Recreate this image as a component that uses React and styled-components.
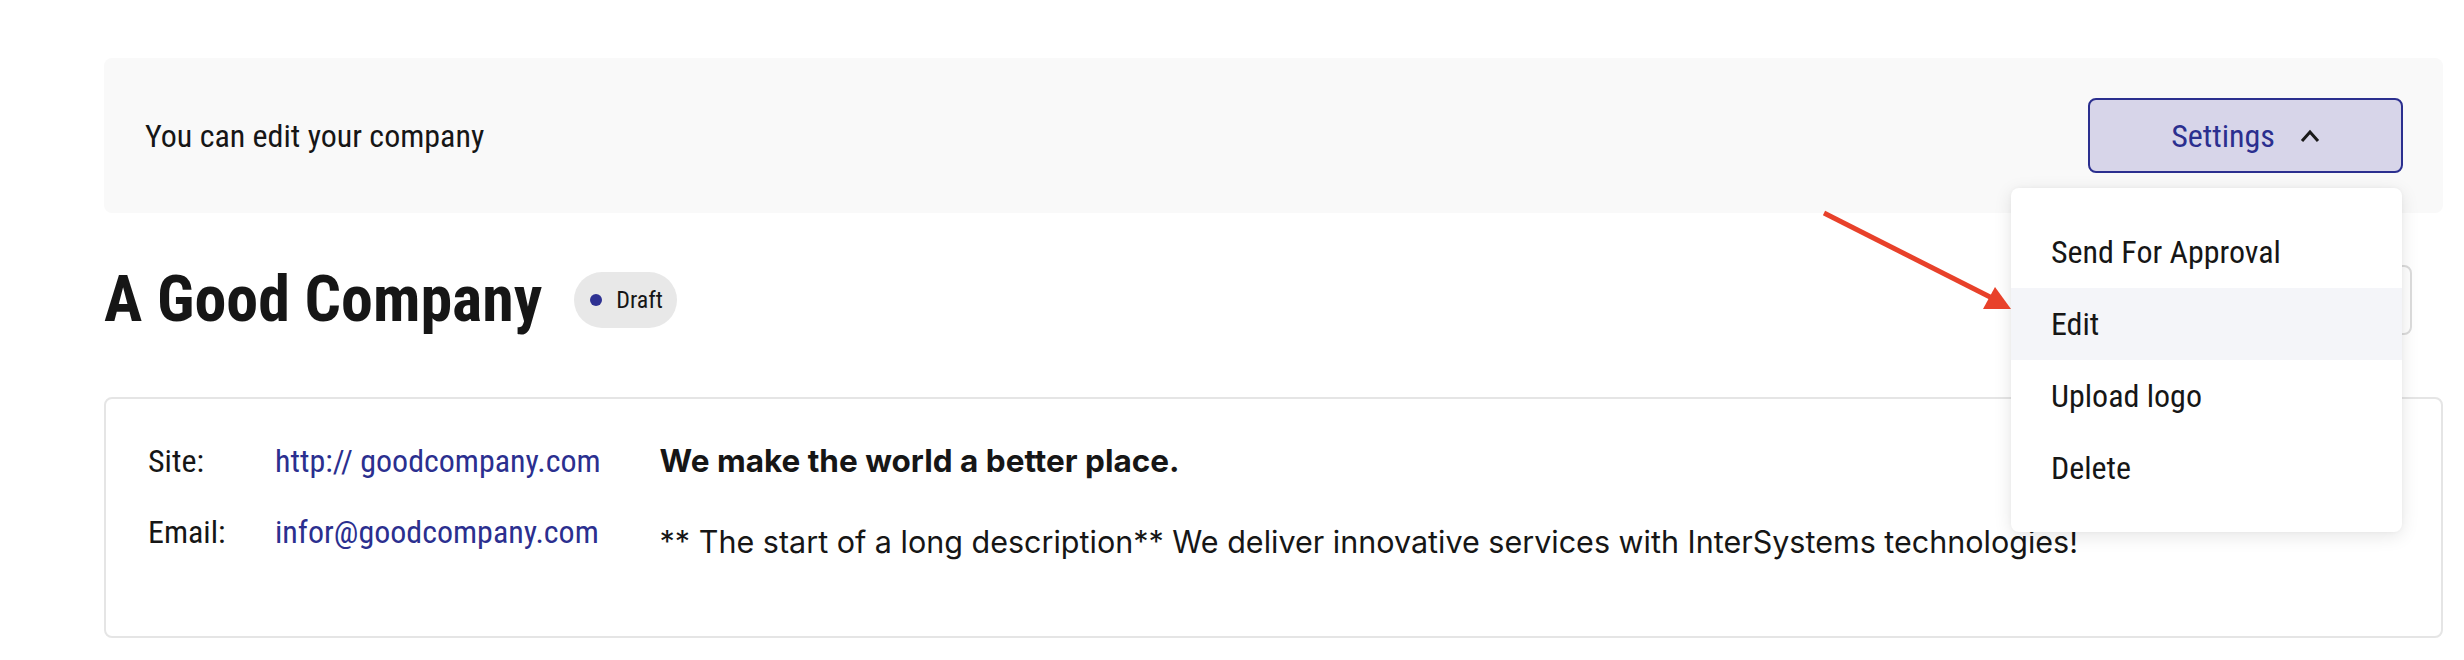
import styled, { createGlobalStyle } from "styled-components";

const GlobalStyle = createGlobalStyle`
  body {
    margin: 0;
    background: #ffffff;
    font-family: "Roboto Condensed", Roboto, "Liberation Sans", sans-serif;
    font-stretch: condensed;
    color: #161616;
  }
`;

const menuItems = ["Send For Approval", "Edit", "Upload logo", "Delete"];

export default function App() {
  return (
    <Page>
      <GlobalStyle />
      <Toolbar>
        <ToolbarText>You can edit your company</ToolbarText>
        <SettingsWrap>
          <SettingsButton>
            Settings
            <Chevron viewBox="0 0 20 14">
              <path d="M2 12 L10 3 L18 12" />
            </Chevron>
          </SettingsButton>
          <Menu>
            {menuItems.map((item) => (
              <MenuItem key={item} $active={item === "Edit"}>
                {item}
              </MenuItem>
            ))}
          </Menu>
        </SettingsWrap>
      </Toolbar>

      <TitleRow>
        <TitleGroup>
          <Title>A Good Company</Title>
          <Badge>
            <Dot />
            Draft
          </Badge>
        </TitleGroup>
        <GhostButton />
      </TitleRow>

      <Card>
        <Details>
          <Label>Site:</Label>
          <Value>http:// goodcompany.com</Value>
          <Label>Email:</Label>
          <Value>infor@goodcompany.com</Value>
        </Details>
        <About>
          <Headline>We make the world a better place.</Headline>
          <Description>
            ** The start of a long description** We deliver innovative services
            with InterSystems technologies!
          </Description>
        </About>
      </Card>

      <Arrow width="220" height="110" viewBox="0 0 220 110">
        <line x1="3" y1="3" x2="175" y2="90" />
        <polygon points="162,99 174,77 190,99" />
      </Arrow>
    </Page>
  );
}

const Page = styled.div`
  position: relative;
  padding: 58px 21px 0 104px;
`;

const Toolbar = styled.div`
  height: 155px;
  box-sizing: border-box;
  padding: 0 40px 0 41px;
  display: flex;
  align-items: center;
  justify-content: space-between;
  background: #f9f9f9;
  border-radius: 8px;
`;

const ToolbarText = styled.span`
  font-size: 32px;
`;

const SettingsWrap = styled.div`
  position: relative;
`;

const SettingsButton = styled.button`
  width: 315px;
  height: 75px;
  display: flex;
  align-items: center;
  justify-content: center;
  gap: 25px;
  padding: 0;
  background: #d7d5e9;
  border: 2px solid #2b2f8f;
  border-radius: 8px;
  color: #2b2f8f;
  font-family: inherit;
  font-stretch: condensed;
  font-size: 32px;
`;

const Chevron = styled.svg`
  width: 20px;
  height: 14px;
  fill: none;
  stroke: #1a1a1a;
  stroke-width: 3;
`;

const Menu = styled.ul`
  position: absolute;
  top: calc(100% + 15px);
  right: 1px;
  z-index: 5;
  width: 391px;
  margin: 0;
  padding: 28px 0;
  list-style: none;
  background: #ffffff;
  border-radius: 8px;
  box-shadow: 0 4px 18px rgba(0, 0, 0, 0.1), 0 0 4px rgba(0, 0, 0, 0.04);
`;

const MenuItem = styled.li`
  height: 72px;
  display: flex;
  align-items: center;
  padding-left: 40px;
  font-size: 32px;
  background: ${(p) => (p.$active ? "#f4f5f9" : "transparent")};
`;

const TitleRow = styled.div`
  margin-top: 52px;
  height: 70px;
  padding-right: 31px;
  display: flex;
  align-items: center;
  justify-content: space-between;
`;

const TitleGroup = styled.div`
  display: flex;
  align-items: center;
  gap: 32px;
`;

const Title = styled.h1`
  margin: 0;
  font-size: 64px;
  font-weight: 700;
  line-height: 1;
`;

const Badge = styled.span`
  height: 56px;
  box-sizing: border-box;
  padding: 0 14px 0 16px;
  display: flex;
  align-items: center;
  gap: 14px;
  background: #e8e8e8;
  border-radius: 28px;
  font-size: 24px;
`;

const Dot = styled.span`
  width: 12px;
  height: 12px;
  border-radius: 50%;
  background: #2e3192;
`;

const GhostButton = styled.div`
  width: 320px;
  height: 70px;
  box-sizing: border-box;
  border: 2px solid #dcdcdc;
  border-radius: 8px;
  background: #ffffff;
`;

const Card = styled.div`
  margin-top: 62px;
  height: 241px;
  box-sizing: border-box;
  padding: 38px 42px 0;
  display: flex;
  gap: 59px;
  border: 2px solid #e5e5e5;
  border-radius: 8px;
`;

const Details = styled.div`
  display: grid;
  grid-template-columns: 127px auto;
  row-gap: 23px;
  align-content: start;
  font-size: 32px;
  line-height: 48px;
`;

const Label = styled.span`
  color: #161616;
`;

const Value = styled.span`
  color: #2b2f8f;
`;

const About = styled.div`
  display: flex;
  flex-direction: column;
  gap: 33px;
  font-family: Inter, "Liberation Sans", Arial, sans-serif;
  font-stretch: normal;
  font-size: 30.5px;
  line-height: 48px;
`;

const Headline = styled.p`
  margin: 0;
  font-size: 31.5px;
  font-weight: 700;
`;

const Description = styled.p`
  margin: 0;
`;

const Arrow = styled.svg`
  position: absolute;
  left: 1821px;
  top: 210px;
  z-index: 6;
  overflow: visible;

  line {
    stroke: #e8412a;
    stroke-width: 5;
  }

  polygon {
    fill: #e8412a;
  }
`;
